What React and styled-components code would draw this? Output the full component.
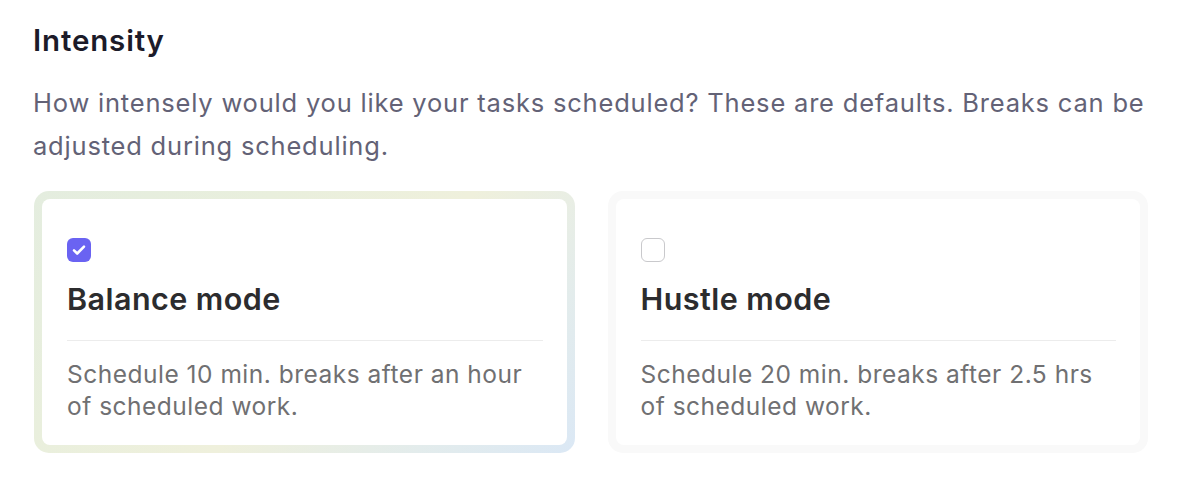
import React, { useState } from "react";
import styled, { createGlobalStyle } from "styled-components";

const GlobalStyle = createGlobalStyle`
  body {
    margin: 0;
    background: #ffffff;
    font-family: Inter, "Noto Sans", sans-serif;
  }
`;

const Container = styled.div`
  padding: 20px 40px 0 33px;
`;

const Title = styled.h2`
  margin: 0;
  font-size: 29.5px;
  line-height: 40px;
  font-weight: 600;
  letter-spacing: 0.85px;
  color: #1c1b29;
`;

const Subtitle = styled.p`
  margin: 21px 0 0;
  font-size: 25.5px;
  line-height: 43px;
  letter-spacing: 0.8px;
  color: #636276;
`;

const Cards = styled.div`
  margin-top: 24px;
  margin-left: 1px;
  display: grid;
  grid-template-columns: 1fr 1fr;
  gap: 33px;
`;

const Ring = styled.div`
  padding: 8px;
  border-radius: 15px;
  cursor: pointer;
  background: ${(p) =>
    p.$selected
      ? "linear-gradient(135deg, #e4eddf 0%, #e9efdd 30%, #eff0dc 55%, #e3ecec 80%, #dbe8f5 100%)"
      : "#f9f9f9"};
`;

const Card = styled.div`
  background: #fff;
  border-radius: 8px;
  padding: 39px 24px 23px 25px;
`;

const Box = styled.div`
  width: 24px;
  height: 24px;
  box-sizing: border-box;
  border-radius: 6px;
  display: flex;
  align-items: center;
  justify-content: center;
  background: ${(p) => (p.$checked ? "#6a63f2" : "#fff")};
  border: ${(p) => (p.$checked ? "none" : "1.5px solid #c9c9cc")};
`;

const CardTitle = styled.div`
  margin-top: 19px;
  font-size: 30.5px;
  line-height: 36px;
  font-weight: 600;
  letter-spacing: 0.45px;
  color: #2c2c2e;
`;

const Divider = styled.hr`
  margin: 23px 0 0;
  border: none;
  border-top: 1.5px solid #ececec;
`;

const Desc = styled.p`
  margin: 17px 0 0;
  font-size: 24.5px;
  line-height: 32px;
  letter-spacing: 0.5px;
  color: #707072;
`;

const modes = [
  {
    id: "balance",
    title: "Balance mode",
    text: "Schedule 10 min. breaks after an hour of scheduled work.",
  },
  {
    id: "hustle",
    title: "Hustle mode",
    text: "Schedule 20 min. breaks after 2.5 hrs of scheduled work.",
  },
];

const Check = () => (
  <svg width="18" height="18" viewBox="0 0 18 18" fill="none">
    <path
      d="M4 9.4l3.2 3.1L14 5.6"
      stroke="#fff"
      strokeWidth="2.6"
      strokeLinecap="round"
      strokeLinejoin="round"
    />
  </svg>
);

const App = () => {
  const [mode, setMode] = useState("balance");

  return (
    <Container>
      <GlobalStyle />
      <Title>Intensity</Title>
      <Subtitle>
        How intensely would you like your tasks scheduled? These are defaults.
        Breaks can be adjusted during scheduling.
      </Subtitle>
      <Cards>
        {modes.map((m) => {
          const selected = mode === m.id;
          return (
            <Ring key={m.id} $selected={selected} onClick={() => setMode(m.id)}>
              <Card>
                <Box $checked={selected}>{selected && <Check />}</Box>
                <CardTitle>{m.title}</CardTitle>
                <Divider />
                <Desc>{m.text}</Desc>
              </Card>
            </Ring>
          );
        })}
      </Cards>
    </Container>
  );
};

export default App;
